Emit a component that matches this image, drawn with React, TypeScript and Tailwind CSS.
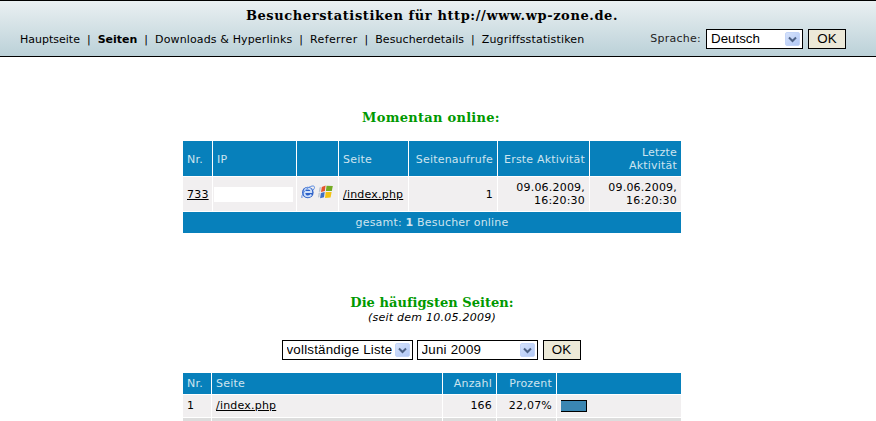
import React from "react";

const verdana = "font-['DejaVu_Sans',sans-serif] text-[11px]";
const serifTitle = "font-['DejaVu_Serif',serif] font-bold";

const navItems = [
  { label: "Hauptseite", cls: "" },
  { label: "Seiten", cls: "font-bold" },
  { label: "Downloads & Hyperlinks", cls: "tracking-[0.14px]" },
  { label: "Referrer", cls: "tracking-[0.38px]" },
  { label: "Besucherdetails", cls: "tracking-[0.07px]" },
  { label: "Zugriffsstatistiken", cls: "tracking-[0.16px]" },
];

const Arrow = () => (
  <span className="absolute right-[2px] top-[2px] bottom-[2px] w-[15px] flex items-center justify-center bg-gradient-to-br from-[#d5e2fb] to-[#b2c8f5] rounded-[2px] border border-[#c4d5f8] pointer-events-none">
    <svg width="9" height="7" viewBox="0 0 9 7">
      <path d="M1 1.5 L4.5 5 L8 1.5" fill="none" stroke="#4d6185" strokeWidth="2" />
    </svg>
  </span>
);

const Select = ({ value, className, options }: { value: string; className: string; options?: string[] }) => (
  <span className={`relative inline-block h-5 bg-white border border-black ${className}`}>
    <select
      defaultValue={value}
      className="w-full h-full appearance-none bg-white pl-[4px] pr-5 font-['Liberation_Sans',sans-serif] text-[13.33px] leading-[18px] text-black outline-none rounded-none"
    >
      {(options ?? [value]).map((o) => (
        <option key={o}>{o}</option>
      ))}
    </select>
    <Arrow />
  </span>
);

const OkButton = () => (
  <button className="h-5 w-[38px] bg-[#ece9d8] border border-black font-['Liberation_Sans',sans-serif] text-[13.33px] leading-none text-black">
    OK
  </button>
);

const IeIcon = () => (
  <svg width="14" height="14" viewBox="0 0 14 14">
    <circle cx="6.800" cy="7.500" r="5.800" fill="#2f62c8" />
    <path d="M3.600 7h6.700C10.300 4.800 8.900 3.500 7 3.500S3.400 5 3.400 7.400 5 11.400 7.100 11.400c1.500 0 2.600-.7 3.200-1.900" fill="none" stroke="#cfe0fa" strokeWidth="1.800" />
    <path d="M1 13C-.2 10.500 4.500 3.500 9.500 1.500c2.200-.9 4-.7 4 .8 0 .8-.5 1.800-1.300 2.800" fill="none" stroke="#5b8be0" strokeWidth="1" />
  </svg>
);

const WinIcon = () => (
  <svg width="15" height="14" viewBox="0 0 15 14">
    <path d="M1.500 2.500 L3 2 L2.300 6.500 L.8 7 Z" fill="#b9c4d2" />
    <path d="M.6 8 L2 7.500 L1.300 12 L0 12.500 Z" fill="#b9c4d2" />
    <path d="M3.800 1.900 L7.600 .5 L6.900 6 L3 6.900 Z" fill="#e4552c" />
    <path d="M8.500 .7 L14.800 1 L13.800 6 L7.900 6 Z" fill="#75ab22" />
    <path d="M2.900 7.900 L6.700 7 L6 12.200 L2.100 13.300 Z" fill="#3f70c6" />
    <path d="M7.700 7 L13.600 7 L12.600 12.400 L7 12.900 Z" fill="#f4c313" />
  </svg>
);

const th = "bg-[#0780bb] text-[#cde4ef] font-normal align-middle px-1 pt-[1px] border-l border-white first:border-l-0";
const td = "bg-[#f1eff0] text-black align-middle border-l border-t border-white first:border-l-0";

export default function App() {
  return (
    <div className="h-[421px] w-[876px] overflow-hidden bg-white">
      <header className="h-[57px] border-y border-black bg-gradient-to-b from-[#eaf0f2] to-[#bbd1d8]">
        <div className="w-[864px]">
          <h1 className={`${serifTitle} text-center text-[13px] leading-[15px] pt-[7px] tracking-[0.6px] text-black`}>
            Besucherstatistiken für http://www.wp-zone.de.
          </h1>
          <div className={`${verdana} flex items-center justify-between pl-5 mt-[6px] text-black w-[876px] pr-[30px]`}>
            <nav className="flex pt-[3px]">
              {navItems.map((item, i) => (
                <span key={item.label} className="whitespace-pre">
                  {i > 0 && <span>{"  |  "}</span>}
                  <span className={item.cls}>{item.label}</span>
                </span>
              ))}
            </nav>
            <div className="flex items-center">
              <span className="mr-[5px] pt-[1px] text-[#222] tracking-[0.25px]">Sprache:</span>
              <Select value="Deutsch" className="w-[97px] mr-[5px]" options={["Deutsch", "English"]} />
              <OkButton />
            </div>
          </div>
        </div>
      </header>

      <main className={`${verdana} tracking-[0.2px] w-[864px] flex flex-col items-center`}>
        <h2 className={`${serifTitle} text-[#009900] text-[13px] leading-4 mt-[53px] mr-[2px] tracking-[0.27px]`}>Momentan online:</h2>

        <table className="mt-[15px] w-[498px] table-fixed border-separate border-spacing-0">
          <colgroup>
            <col className="w-[29px]" />
            <col className="w-[84px]" />
            <col className="w-[42px]" />
            <col className="w-[70px]" />
            <col className="w-[89px]" />
            <col className="w-[92px]" />
            <col className="w-[92px]" />
          </colgroup>
          <thead>
            <tr className="h-[35px] leading-[13px]">
              <th className={`${th} text-left`}>Nr.</th>
              <th className={`${th} text-left`}>IP</th>
              <th className={th}></th>
              <th className={`${th} text-left`}>Seite</th>
              <th className={`${th} text-right whitespace-nowrap`}>Seitenaufrufe</th>
              <th className={`${th} text-right whitespace-nowrap`}>Erste Aktivität</th>
              <th className={`${th} text-right`}>Letzte Aktivität</th>
            </tr>
          </thead>
          <tbody>
            <tr className="h-[35px] leading-[13px]">
              <td className={`${td} px-1`}><span className="underline">733</span></td>
              <td className={`${td} pl-[1px]`}><div className="h-[15px] w-[79px] bg-white"></div></td>
              <td className={td}>
                <div className="flex items-start gap-[3px] pl-[4px] -mt-[5px]">
                  <IeIcon />
                  <WinIcon />
                </div>
              </td>
              <td className={`${td} px-1`}><span className="underline">/index.php</span></td>
              <td className={`${td} px-1 text-right`}>1</td>
              <td className={`${td} px-1 text-right`}>09.06.2009,<br />16:20:30</td>
              <td className={`${td} px-1 text-right`}>09.06.2009,<br />16:20:30</td>
            </tr>
            <tr className="h-[22px]">
              <td colSpan={7} className="bg-[#0780bb] text-[#cde4ef] text-center border-t border-white pt-[1px]">
                gesamt: <b>1</b> Besucher online
              </td>
            </tr>
          </tbody>
        </table>

        <h2 className={`${serifTitle} text-[#009900] text-[13px] leading-4 mt-[62px] tracking-[0.03px]`}>Die häufigsten Seiten:</h2>
        <p className="italic leading-[13px] tracking-[0.25px]">(seit dem 10.05.2009)</p>

        <div className="flex items-center mt-4 gap-1 mr-[2px]">
          <Select value="vollständige Liste" className="w-[131px]" options={["vollständige Liste"]} />
          <Select value="Juni 2009" className="w-[121px]" options={["Juni 2009"]} />
          <span className="ml-[1px]"><OkButton /></span>
        </div>

        <table className="mt-[13px] w-[498px] table-fixed border-separate border-spacing-0">
          <colgroup>
            <col className="w-[28px]" />
            <col className="w-[231px]" />
            <col className="w-[54px]" />
            <col className="w-[60px]" />
            <col className="w-[125px]" />
          </colgroup>
          <thead>
            <tr className="h-[21px]">
              <th className={`${th} text-left`}>Nr.</th>
              <th className={`${th} text-left`}>Seite</th>
              <th className={`${th} text-right`}>Anzahl</th>
              <th className={`${th} text-right`}>Prozent</th>
              <th className={th}></th>
            </tr>
          </thead>
          <tbody>
            <tr className="h-[23px]">
              <td className={`${td} px-1 pt-[1px]`}>1</td>
              <td className={`${td} px-1 pt-[1px]`}><span className="underline">/index.php</span></td>
              <td className={`${td} px-1 pt-[1px] text-right`}>166</td>
              <td className={`${td} px-1 pt-[1px] text-right`}>22,07%</td>
              <td className={`${td} pl-1`}>
                <div className="h-[12px] w-[26px] bg-[#3a86b2] border-y border-r border-black"></div>
              </td>
            </tr>
            <tr className="h-[23px]">
              <td className="bg-[#dddddd] border-t border-white"></td>
              <td className="bg-[#dddddd] border-t border-l border-white"></td>
              <td className="bg-[#dddddd] border-t border-l border-white"></td>
              <td className="bg-[#dddddd] border-t border-l border-white"></td>
              <td className="bg-[#dddddd] border-t border-l border-white"></td>
            </tr>
          </tbody>
        </table>
      </main>
    </div>
  );
}
